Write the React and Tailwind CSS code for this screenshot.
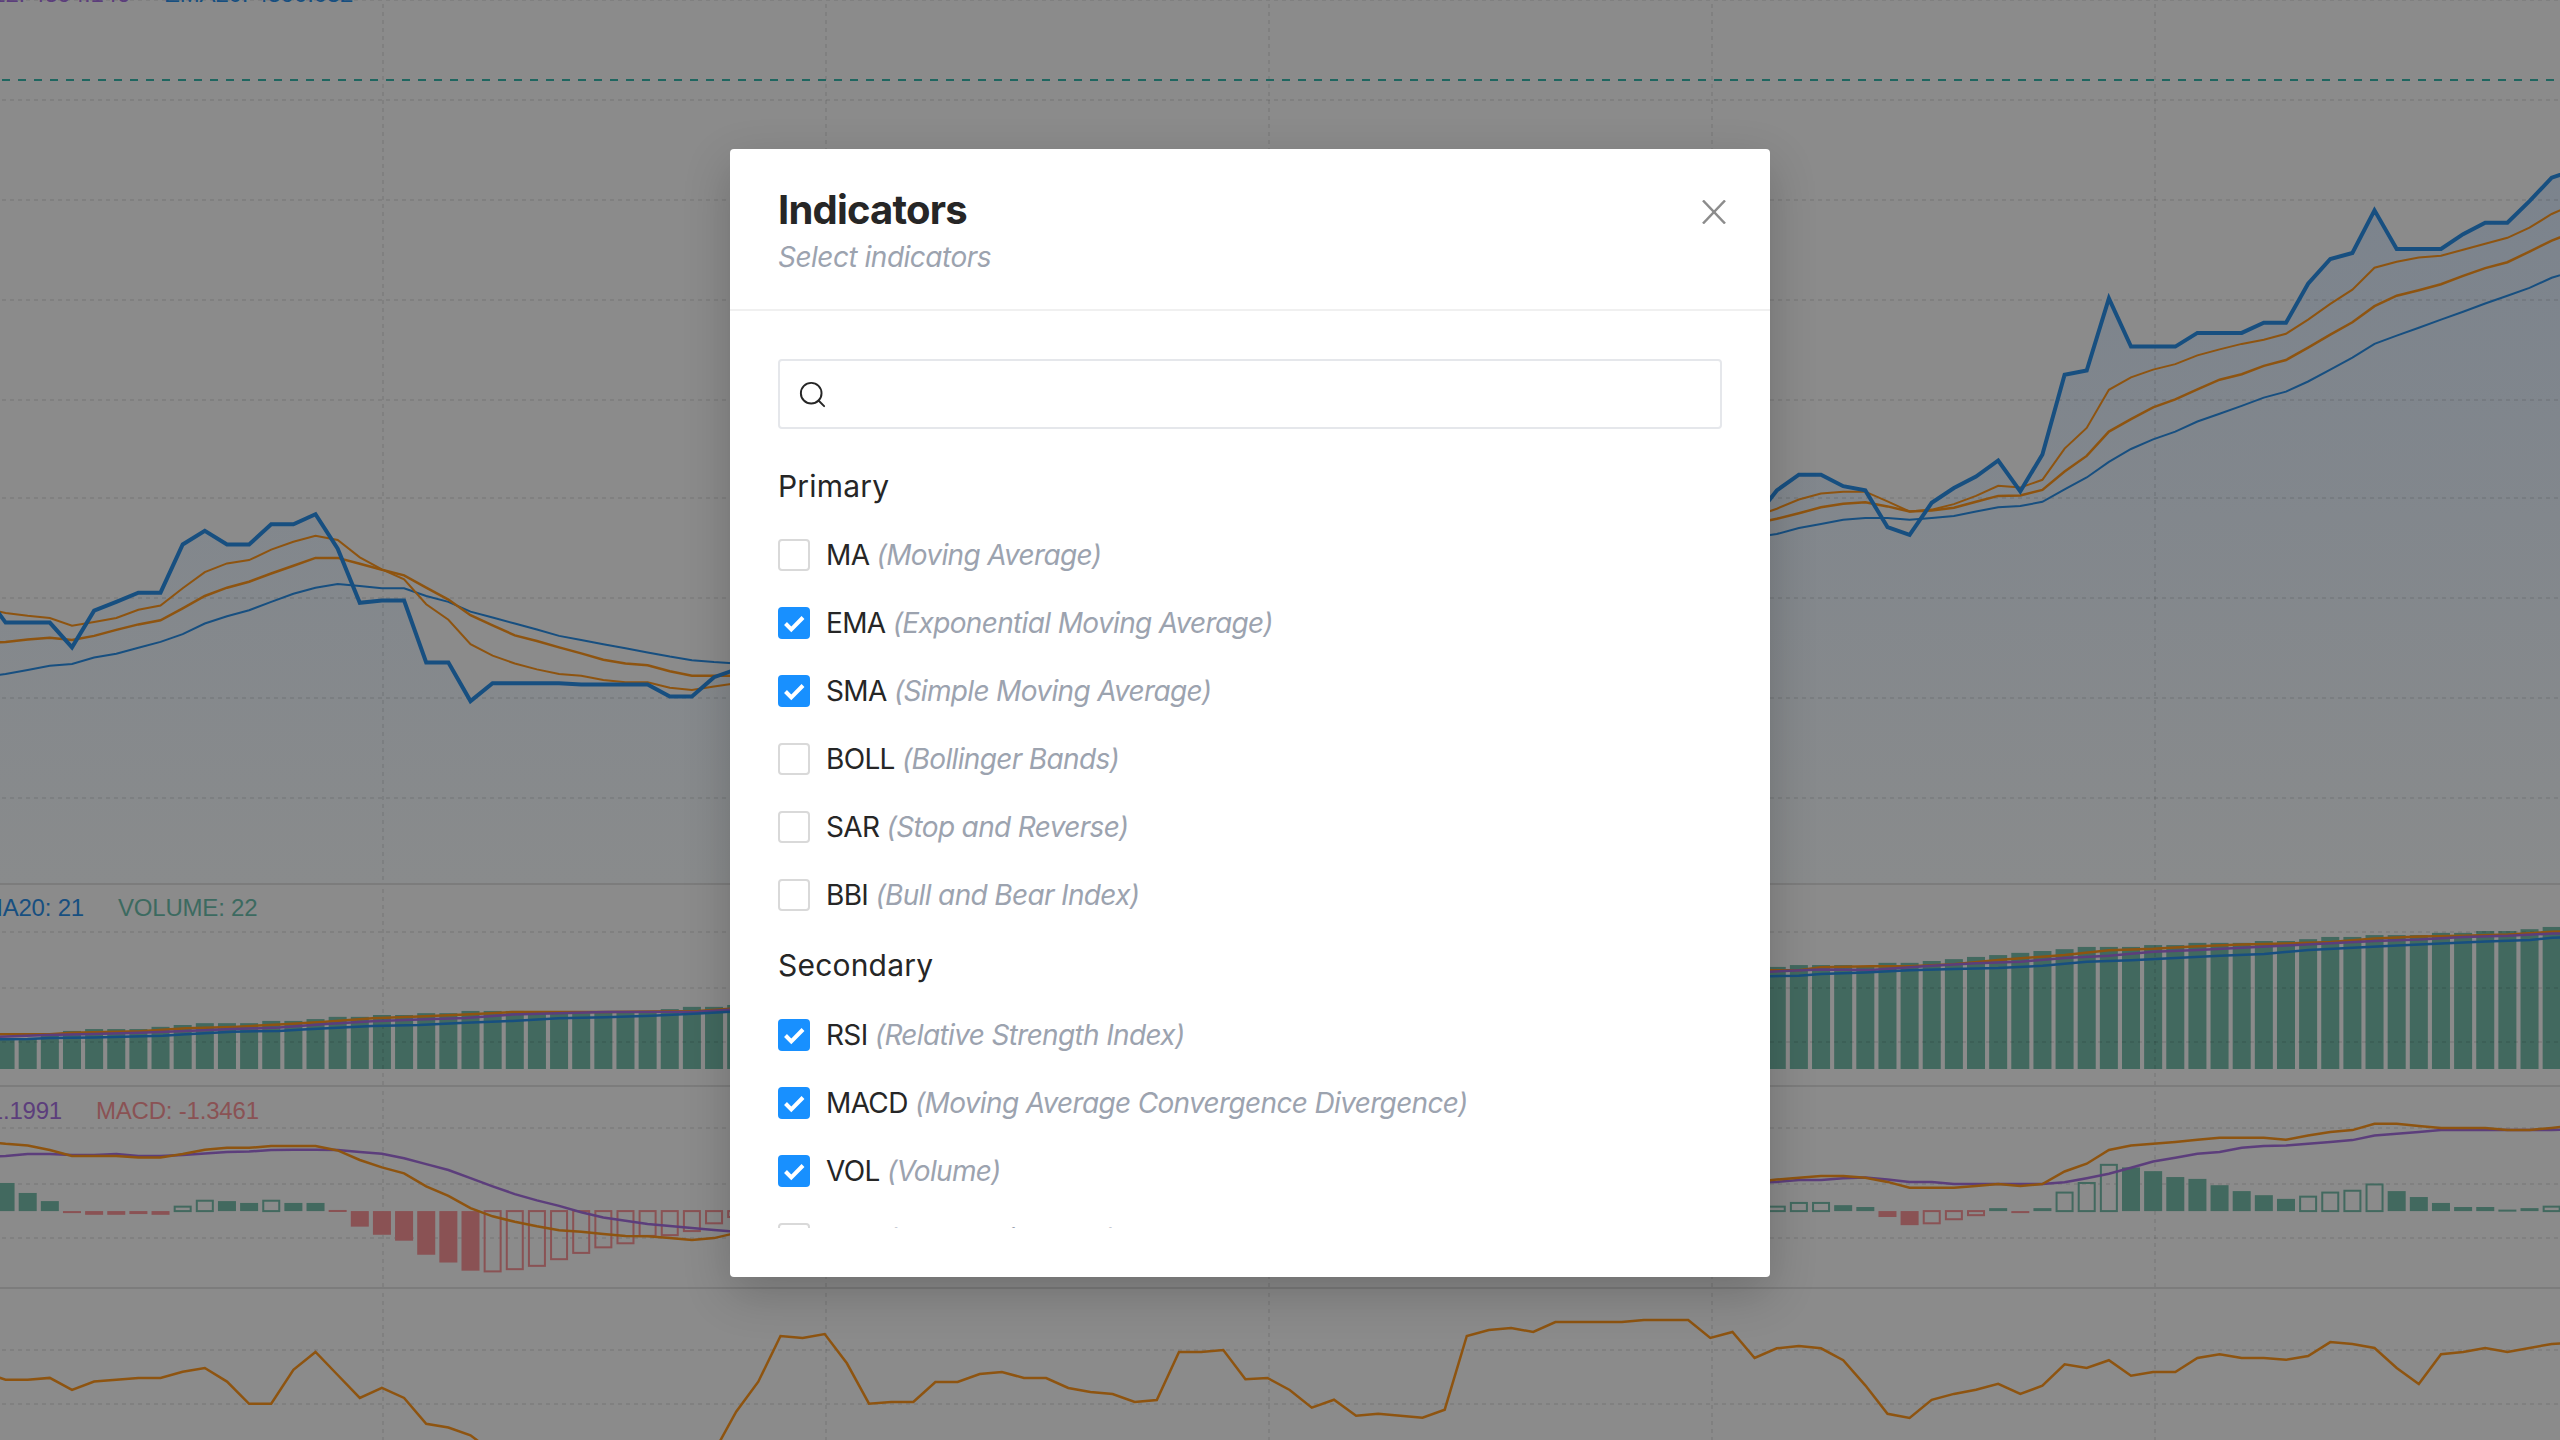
import { Search } from "lucide-react";

const kx = (k) => 27.7 + 22.14 * k;
const mainY = (z) => z / 2.178;
const lowY = (z) => 860 + z / 2.703;
const leftX = (z) => z / 2.148;
const rightX = (z) => 1770 + z / 1.985;

const VERTICALS = [383, 826, 1269, 1712, 2155];

const ORANGE = "#8e5410";
const BLUE = "#174f80";
const PURPLE = "#5c3e7c";
const TEAL = "#42695f";
const RED = "#8a5254";

// per candle values, k = -2..32 and k = 78..115
const seq = (from, vals, toY) => vals.map((v, i) => [kx(from + i), toY(v)]);
const pts = (list) => list.map(([x, y]) => `${x.toFixed(1)},${y.toFixed(1)}`).join(" ");
const both = (l, r, toY) => [...seq(-2, l, toY), ...seq(78, r, toY)];

const CLOSE = both(
  [1290, 1356, 1356, 1356, 1410, 1330, 1311, 1291, 1291, 1186, 1156, 1186, 1186, 1142, 1142, 1120, 1195, 1313, 1308, 1308, 1443, 1443, 1527, 1488, 1488, 1488, 1488, 1491, 1491, 1491, 1491, 1517, 1517, 1475, 1458],
  [1130, 1068, 1034, 1034, 1059, 1068, 1148, 1165, 1095, 1063, 1038, 1003, 1070, 990, 816, 807, 650, 755, 755, 755, 725, 725, 725, 703, 703, 618, 564, 551, 458, 542, 542, 542, 510, 485, 485, 438, 387, 370],
  mainY
);
const MA_FAST = both(
  [1325, 1335, 1341, 1346, 1363, 1355, 1346, 1328, 1319, 1281, 1246, 1227, 1220, 1197, 1180, 1167, 1176, 1214, 1240, 1262, 1316, 1350, 1403, 1428, 1445, 1458, 1468, 1472, 1481, 1486, 1486, 1498, 1503, 1495, 1488],
  [1125, 1108, 1088, 1075, 1071, 1071, 1092, 1114, 1110, 1098, 1080, 1058, 1062, 1045, 977, 932, 849, 822, 805, 793, 774, 761, 749, 740, 727, 696, 662, 631, 583, 570, 561, 557, 544, 531, 518, 496, 466, 445],
  mainY
);
const MA_MID = both(
  [1402, 1398, 1393, 1389, 1394, 1385, 1372, 1360, 1351, 1325, 1298, 1280, 1267, 1249, 1232, 1215, 1215, 1228, 1241, 1253, 1280, 1306, 1340, 1362, 1384, 1396, 1410, 1423, 1437, 1445, 1449, 1462, 1472, 1472, 1472],
  [1140, 1130, 1118, 1105, 1097, 1094, 1103, 1114, 1112, 1106, 1093, 1080, 1079, 1067, 1027, 993, 940, 913, 887, 870, 848, 827, 815, 797, 784, 757, 729, 702, 667, 644, 632, 619, 601, 584, 571, 548, 524, 505],
  mainY
);
const MA_SLOW = both(
  [1474, 1468, 1459, 1450, 1446, 1432, 1424, 1411, 1398, 1381, 1358, 1342, 1329, 1311, 1293, 1280, 1272, 1276, 1281, 1281, 1298, 1311, 1332, 1345, 1358, 1371, 1385, 1394, 1403, 1412, 1421, 1430, 1438, 1442, 1445],
  [1170, 1163, 1150, 1141, 1132, 1128, 1128, 1132, 1128, 1124, 1114, 1105, 1102, 1093, 1066, 1040, 1006, 978, 957, 940, 918, 901, 884, 866, 853, 831, 805, 779, 749, 731, 714, 696, 679, 661, 644, 627, 605, 590],
  mainY
);

const DIF = both(
  [760, 767, 772, 784, 800, 800, 800, 804, 804, 795, 783, 778, 778, 773, 773, 773, 785, 811, 831, 847, 882, 908, 941, 963, 978, 990, 1001, 1005, 1011, 1016, 1017, 1022, 1027, 1022, 1008],
  [870, 864, 859, 854, 854, 859, 870, 886, 886, 886, 881, 876, 881, 876, 842, 821, 784, 772, 767, 762, 756, 751, 751, 751, 756, 745, 735, 730, 713, 713, 719, 724, 724, 724, 730, 730, 724, 718],
  lowY
);
const DEA = both(
  [803, 800, 795, 795, 797, 797, 795, 800, 800, 797, 793, 789, 788, 784, 783, 783, 784, 789, 794, 806, 822, 838, 860, 882, 903, 920, 935, 952, 966, 975, 984, 989, 995, 1000, 1005],
  [872, 870, 865, 865, 860, 858, 864, 870, 870, 876, 876, 876, 876, 876, 871, 860, 848, 832, 815, 805, 794, 789, 778, 773, 772, 767, 762, 757, 745, 740, 735, 730, 730, 730, 730, 730, 730, 728],
  lowY
);

const RSI = [
  ...seq(-2, [1385, 1405, 1405, 1400, 1432, 1410, 1405, 1400, 1400, 1383, 1373, 1410, 1470, 1470, 1378, 1330, 1392, 1454, 1427, 1454, 1524, 1534, 1555, 1600], lowY),
  [kx(31), 1452],
  ...seq(32, [1411.7, 1381.7, 1336, 1338, 1334, 1363.3, 1403.7, 1402, 1402, 1382, 1382, 1374, 1372, 1378, 1378, 1388, 1392, 1394, 1402, 1400, 1352, 1352, 1350, 1379.3, 1378, 1390, 1407.7, 1399.7, 1415.7, 1413.7, 1415.7, 1417.7, 1409.7, 1336, 1330, 1328, 1332, 1322, 1322, 1322, 1322, 1320, 1320, 1320, 1338, 1332, 1358], (v) => v),
  ...seq(79, [1320, 1314, 1320, 1352, 1420, 1497, 1508, 1459, 1443, 1432, 1416, 1443, 1421, 1363, 1373, 1352, 1394, 1384, 1384, 1346, 1336, 1346, 1346, 1351, 1341, 1303, 1308, 1319, 1373, 1416, 1336, 1330, 1319, 1330, 1319, 1308, 1305], lowY),
];

const VOLUME_TOPS = [
  [-1, [483, 483, 475, 462, 457, 457, 457, 451, 446, 441, 441, 441, 435, 435, 430, 424, 424, 419, 419, 414, 414, 408, 408, 408, 414, 414, 414, 411, 411, 408, 403, 397, 397, 392]],
  [79, [289, 284, 284, 284, 289, 278, 278, 273, 268, 262, 257, 251, 246, 241, 235, 235, 235, 230, 230, 224, 224, 224, 219, 219, 214, 208, 208, 203, 203, 203, 197, 197, 192, 192, 187, 181]],
];

const traced = (l, r) => [
  ...l.map(([x, y]) => [leftX(x), lowY(y)]),
  ...r.map(([x, y]) => [rightX(x), lowY(y)]),
];
const VOL_A = traced(
  [[-20, 471], [107, 471], [155, 467], [300, 463], [400, 455], [500, 451], [600, 445], [700, 437], [800, 428], [900, 423], [1000, 418], [1100, 411], [1300, 411], [1500, 408], [1568, 402]],
  [[0, 298], [57, 298], [101, 290], [200, 287], [277, 287], [365, 282], [453, 270], [585, 257], [673, 244], [761, 240], [849, 233], [937, 228], [1025, 226], [1113, 222], [1201, 212], [1289, 207], [1377, 205], [1465, 201], [1553, 194], [1590, 192]]
);
const VOL_B = traced(
  [[-20, 479], [100, 473], [200, 470], [300, 467], [400, 462], [500, 457], [600, 453], [700, 443], [800, 436], [900, 431], [1000, 427], [1100, 418], [1200, 414], [1300, 411], [1500, 410], [1568, 405]],
  [[0, 302], [100, 296], [200, 297], [321, 286], [409, 279], [497, 275], [585, 265], [673, 259], [761, 248], [849, 243], [937, 237], [1025, 231], [1113, 225], [1201, 219], [1289, 215], [1377, 208], [1465, 205], [1553, 199], [1590, 198]]
);
const VOL_C = traced(
  [[-20, 485], [59, 484], [107, 481], [200, 480], [350, 475], [400, 471], [500, 464], [600, 462], [650, 458], [800, 449], [900, 446], [1000, 440], [1100, 435], [1200, 428], [1300, 425], [1400, 421], [1500, 415], [1568, 410]],
  [[0, 314], [57, 313], [101, 308], [189, 304], [277, 298], [365, 295], [453, 292], [541, 286], [629, 275], [717, 271], [805, 265], [893, 259], [981, 254], [1069, 243], [1157, 237], [1245, 231], [1333, 226], [1421, 220], [1509, 216], [1553, 210], [1590, 208]]
);

// MACD bars: [extent, kind] g/r colour, s/h solid or hollow
const BARS = [
  [-1, [[873, "gs"], [900, "gs"], [922, "gs"], [953, "rs"], [959, "rs"], [959, "rs"], [957, "rs"], [959, "rs"], [937, "gh"], [921, "gh"], [922, "gs"], [927, "gs"], [921, "gh"], [927, "gs"], [927, "gs"], [946, "rs"], [991, "rs"], [1013, "rs"], [1029, "rs"], [1067, "rs"], [1088, "rs"], [1110, "rs"], [1112, "rh"], [1106, "rh"], [1097, "rh"], [1079, "rh"], [1062, "rh"], [1047, "rh"], [1036, "rh"], [1016, "rh"], [1014, "rh"], [1003, "rh"], [982, "rh"], [965, "rh"]]],
  [79, [[937, "gh"], [927, "gh"], [927, "gh"], [933, "gs"], [938, "gs"], [965, "rs"], [987, "rs"], [982, "rh"], [971, "rh"], [960, "rh"], [941, "gs"], [953, "rs"], [941, "gs"], [899, "gh"], [873, "gh"], [824, "gh"], [831, "gs"], [841, "gs"], [857, "gs"], [862, "gs"], [879, "gs"], [895, "gs"], [906, "gs"], [916, "gs"], [910, "gh"], [899, "gh"], [894, "gh"], [877, "gh"], [895, "gs"], [911, "gs"], [927, "gs"], [938, "gs"], [938, "gs"], [945, "gs"], [941, "gs"], [937, "gh"]]],
];

const PRIMARY = [
  ["MA", "Moving Average", false],
  ["EMA", "Exponential Moving Average", true],
  ["SMA", "Simple Moving Average", true],
  ["BOLL", "Bollinger Bands", false],
  ["SAR", "Stop and Reverse", false],
  ["BBI", "Bull and Bear Index", false],
];
const SECONDARY = [
  ["RSI", "Relative Strength Index", true],
  ["MACD", "Moving Average Convergence Divergence", true],
  ["VOL", "Volume", true],
  ["KDJ", "Stochastic Index", false],
];

const Grid = ({ top, height, rows }) => (
  <g stroke="rgba(0,0,0,0.08)" strokeWidth="2" strokeDasharray="4 4">
    {rows.map((y) => (
      <line key={y} x1="2" x2="2560" y1={y} y2={y} />
    ))}
    {VERTICALS.map((x) => (
      <line key={x} x1={x} x2={x} y1={top + 4} y2={top + height} />
    ))}
  </g>
);

const Line = ({ data, color, width = 2 }) => (
  <polyline points={pts(data)} fill="none" stroke={color} strokeWidth={width} strokeLinejoin="miter" />
);

const MainChart = () => {
  const area = `${pts(CLOSE)} 2600,884 -20,884`;
  return (
    <svg width="2560" height="883" viewBox="0 0 2560 883" className="block">
      <defs>
        <linearGradient id="closeArea" gradientUnits="userSpaceOnUse" x1="0" x2="0" y1="150" y2="884">
          <stop offset="0" stopColor="#7b838d" />
          <stop offset="1" stopColor="#898b8c" />
        </linearGradient>
      </defs>
      <polygon points={area} fill="url(#closeArea)" />
      <Grid top={0} height={883} rows={[0, 100, 200, 300, 400, 498, 598, 698, 798]} />
      <line x1="2" x2="2560" y1="80" y2="80" stroke="#1f6660" strokeWidth="2" strokeDasharray="8 8" />
      <Line data={MA_SLOW} color={BLUE} />
      <Line data={MA_MID} color={ORANGE} width={2.5} />
      <Line data={MA_FAST} color={ORANGE} />
      <Line data={CLOSE} color={BLUE} width={4} />
    </svg>
  );
};

const VolumeChart = () => (
  <svg width="2560" height="200" viewBox="0 885 2560 200" className="block">
    {VOLUME_TOPS.map(([from, tops]) =>
      tops.map((z, i) => (
        <rect key={from + i} x={kx(from + i) - 9} y={lowY(z)} width="18" height={1069 - lowY(z)} fill={TEAL} />
      ))
    )}
    <Grid top={885} height={200} rows={[932, 988, 1042]} />
    <Line data={VOL_A} color={ORANGE} width={2.5} />
    <Line data={VOL_B} color={PURPLE} width={2.5} />
    <Line data={VOL_C} color={BLUE} width={2.5} />
  </svg>
);

const MacdChart = () => {
  const base = lowY(949);
  return (
    <svg width="2560" height="200" viewBox="0 1087 2560 200" className="block">
      <Grid top={1087} height={200} rows={[1128, 1184, 1238]} />
      {BARS.map(([from, list]) =>
        list.map(([z, kind], i) => {
          const y = lowY(z);
          const color = kind[0] === "g" ? TEAL : RED;
          const top = Math.min(y, base);
          const h = Math.abs(y - base);
          return kind[1] === "s" ? (
            <rect key={from + i} x={kx(from + i) - 9} y={top} width="18" height={Math.max(h, 2)} fill={color} />
          ) : (
            <rect key={from + i} x={kx(from + i) - 8} y={top} width="16" height={h} fill="none" stroke={color} strokeWidth="2" />
          );
        })
      )}
      <Line data={DEA} color={PURPLE} width={2.5} />
      <Line data={DIF} color={ORANGE} width={2.5} />
    </svg>
  );
};

const RsiChart = () => (
  <svg width="2560" height="151" viewBox="0 1289 2560 151" className="block">
    <Grid top={1289} height={151} rows={[1350, 1404]} />
    <Line data={RSI} color={ORANGE} width={2.5} />
  </svg>
);

// first item is cut off by the left edge of the page, so it hangs off a fixed width box
const Legend = ({ top, firstWidth, items }) => (
  <div className={`absolute left-0 flex gap-[34px] whitespace-nowrap font-['Liberation_Sans',sans-serif] text-[24px] leading-[24px] tracking-[-0.2px] ${top}`}>
    {items.map(([label, color], i) => (
      <span key={label} className={`${color} ${i === 0 ? `flex justify-end ${firstWidth}` : ""}`}>
        {label}
      </span>
    ))}
  </div>
);

const Checkbox = ({ checked }) =>
  checked ? (
    <span className="flex h-8 w-8 shrink-0 items-center justify-center rounded bg-[#1890ff]">
      <svg width="32" height="32" viewBox="0 0 32 32" fill="none">
        <polyline points="7.5,16.5 13.3,22.5 25,10.5" stroke="#fff" strokeWidth="4" />
      </svg>
    </span>
  ) : (
    <span className="h-8 w-8 shrink-0 rounded border-2 border-[#d9d9d9] bg-white" />
  );

const Row = ({ name, desc, checked }) => (
  <label className="flex h-[68px] shrink-0 items-center gap-4 text-[28px] leading-[36px] tracking-[-0.65px]">
    <Checkbox checked={checked} />
    <span className="whitespace-nowrap text-[#262626]">
      {name} <em className="text-[#9ca3af]">({desc})</em>
    </span>
  </label>
);

const IndicatorsModal = () => (
  <div className="absolute left-[730px] top-[149px] flex h-[1128px] w-[1040px] flex-col rounded bg-white font-['Inter',sans-serif] shadow-[0_16px_48px_rgba(0,0,0,0.2)]">
    <div className="flex h-[162px] shrink-0 justify-between border-b-2 border-[#f0f0f0] pl-12 pr-[44px] pt-[37px]">
      <div>
        <h1 className="text-[40px] font-bold leading-[48px] tracking-[-0.8px] text-[#262626]">Indicators</h1>
        <p className="mt-[5px] text-[28px] italic leading-[36px] tracking-[-0.5px] text-[#9ca3af]">Select indicators</p>
      </div>
      <button className="mt-[14px] h-6 w-6">
        <svg width="24" height="24" viewBox="0 0 24 24" stroke="#8c8c8c" strokeWidth="2.5">
          <line x1="1" y1="0.5" x2="23" y2="23.5" />
          <line x1="23" y1="0.5" x2="1" y2="23.5" />
        </svg>
      </button>
    </div>
    <div className="flex min-h-0 flex-1 flex-col px-12 pb-[49px] pt-12">
      <div className="flex h-[70px] shrink-0 items-center rounded border-2 border-[#e5e7eb] pl-[17px]">
        <Search size={31} strokeWidth={1.5} color="#262626" />
      </div>
      <div className="flex min-h-0 flex-1 flex-col overflow-hidden pt-[22px]">
        <h2 className="flex h-[70px] shrink-0 items-center text-[30px] tracking-[0.2px] text-[#262626]">Primary</h2>
        {PRIMARY.map(([name, desc, checked]) => (
          <Row key={name} name={name} desc={desc} checked={checked} />
        ))}
        <h2 className="flex h-[72px] shrink-0 items-center text-[30px] tracking-[0.2px] text-[#262626]">Secondary</h2>
        {SECONDARY.map(([name, desc, checked]) => (
          <Row key={name} name={name} desc={desc} checked={checked} />
        ))}
      </div>
    </div>
  </div>
);

export default function App() {
  return (
    <div className="relative h-[1440px] w-[2560px] overflow-hidden bg-[#8b8b8b]">
      <div className="border-b-2 border-[#7c7c7c]">
        <MainChart />
      </div>
      <div className="border-b-2 border-[#7c7c7c]">
        <VolumeChart />
      </div>
      <div className="border-b-2 border-[#7c7c7c]">
        <MacdChart />
      </div>
      <RsiChart />

      <Legend
        top="top-[-18px]"
        firstWidth="w-[130px]"
        items={[
          ["EMA12: 4594.146", "text-[#5c3e7c]"],
          ["EMA20: 4590.032", "text-[#174f80]"],
        ]}
      />
      <Legend
        top="top-[896px]"
        firstWidth="w-[84px]"
        items={[
          ["MA20: 21", "text-[#174f80]"],
          ["VOLUME: 22", "text-[#3c6a60]"],
        ]}
      />
      <Legend
        top="top-[1099px]"
        firstWidth="w-[62px]"
        items={[
          ["DEA: -1.1991", "text-[#5c3e7c]"],
          ["MACD: -1.3461", "text-[#8a5254]"],
        ]}
      />

      <IndicatorsModal />
    </div>
  );
}
